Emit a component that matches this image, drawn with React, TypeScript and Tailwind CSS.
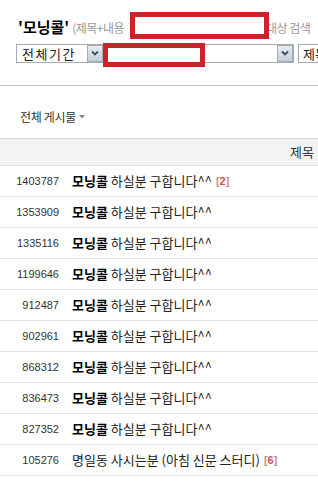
import React from 'react';

type Post = { id: number; title: string; bold?: string; comments?: number };

const posts: Post[] = [
  { id: 1403787, bold: '모닝콜', title: ' 하실분 구합니다^^', comments: 2 },
  { id: 1353909, bold: '모닝콜', title: ' 하실분 구합니다^^' },
  { id: 1335116, bold: '모닝콜', title: ' 하실분 구합니다^^' },
  { id: 1199646, bold: '모닝콜', title: ' 하실분 구합니다^^' },
  { id: 912487, bold: '모닝콜', title: ' 하실분 구합니다^^' },
  { id: 902961, bold: '모닝콜', title: ' 하실분 구합니다^^' },
  { id: 868312, bold: '모닝콜', title: ' 하실분 구합니다^^' },
  { id: 836473, bold: '모닝콜', title: ' 하실분 구합니다^^' },
  { id: 827352, bold: '모닝콜', title: ' 하실분 구합니다^^' },
  { id: 105276, title: '명일동 사시는분 (아침 신문 스터디)', comments: 6 },
];

const font = { fontFamily: '"Noto Sans CJK KR", "Liberation Sans", sans-serif' };

const SelectArrow: React.FC = () => (
  <div className="w-[16px] h-[17px] border border-[#a5acb2] bg-gradient-to-b from-[#e8ecf2] to-[#c5cdd9] flex items-center justify-center shrink-0">
    <svg width="8" height="6" viewBox="0 0 8 6">
      <path d="M1 1.5 L4 4.5 L7 1.5" fill="none" stroke="#3a4d6b" strokeWidth="1.8" />
    </svg>
  </div>
);

const App: React.FC = () => {
  return (
    <div className="relative w-[318px] h-[500px] overflow-hidden bg-white text-[#333]" style={font}>
      {/* search summary */}
      <div className="flex items-baseline whitespace-nowrap pl-[18px] pt-[17px] h-[40px]">
        <span className="text-[15px] font-bold text-black leading-[20px]">'모닝콜'</span>
        <span className="text-[12px] text-[#999] ml-[3px] tracking-[-0.5px]">(제목+내용</span>
        <span className="text-[12px] text-[#999] ml-[142px] tracking-[-0.5px]">대상 검색</span>
      </div>

      {/* filters */}
      <div className="flex items-center whitespace-nowrap pl-[16px] h-[20px] mt-[3px]">
        <div className="flex items-center shrink-0 w-[88px] h-[19px] border border-[#a5acb2] bg-white">
          <span className="flex-1 pl-[5px] text-[13px] leading-[17px] text-[#222] tracking-[1.5px]">전체기간</span>
          <SelectArrow />
        </div>
        <div className="flex items-center shrink-0 w-[190px] h-[19px] border border-[#a5acb2] bg-white">
          <span className="flex-1" />
          <SelectArrow />
        </div>
        <div className="flex items-center shrink-0 w-[80px] h-[19px] border border-[#a5acb2] bg-white ml-[4px]">
          <span className="flex-1 pl-[4px] text-[13px] leading-[17px] text-[#222]">제목</span>
        </div>
      </div>

      <div className="mt-[22px] h-px bg-[#bdbdbd]" />

      {/* board selector */}
      <div className="flex items-center pl-[20px] mt-[23px] h-[16px] text-[12px] text-[#333]">
        <span className="tracking-[-0.3px]">전체 게시물</span>
        <svg className="ml-[3px]" width="6" height="4" viewBox="0 0 6 4">
          <path d="M0 0 L6 0 L3 3.5 Z" fill="#888" />
        </svg>
      </div>

      {/* table */}
      <div className="mt-[13px] border-t border-[#dcdcdc]">
        <div className="flex items-center justify-end h-[27px] bg-[#f3f3f3] border-b border-[#e3e3e3] pr-[4px] text-[13px] text-[#333]">
          제목
        </div>
        {posts.map(p => (
          <div key={p.id} className="flex items-center h-[31px] border-b border-[#e3e3e3] whitespace-nowrap">
            <span
              className="w-[59px] text-right text-[11px] text-[#333]"
              style={{ fontFamily: '"Liberation Sans", sans-serif' }}
            >
              {p.id}
            </span>
            <span className="ml-[13px] text-[13px] text-[#222]">
              {p.bold && <b className="text-black">{p.bold}</b>}
              {p.title}
            </span>
            {p.comments !== undefined && (
              <span
                className="ml-[4px] text-[11px] font-bold text-[#c98a8a]"
                style={{ fontFamily: '"Liberation Sans", sans-serif' }}
              >
                [<span className="text-[#d05050]">{p.comments}</span>]
              </span>
            )}
          </div>
        ))}
      </div>

      {/* redaction boxes */}
      <div className="absolute left-[130px] top-[12px] w-[139px] h-[27px] border-[5px] border-[#cc2229] bg-white" />
      <div className="absolute left-[103px] top-[43px] w-[102px] h-[24px] border-[5px] border-[#cc2229] bg-white" />
    </div>
  );
};

export default App;
